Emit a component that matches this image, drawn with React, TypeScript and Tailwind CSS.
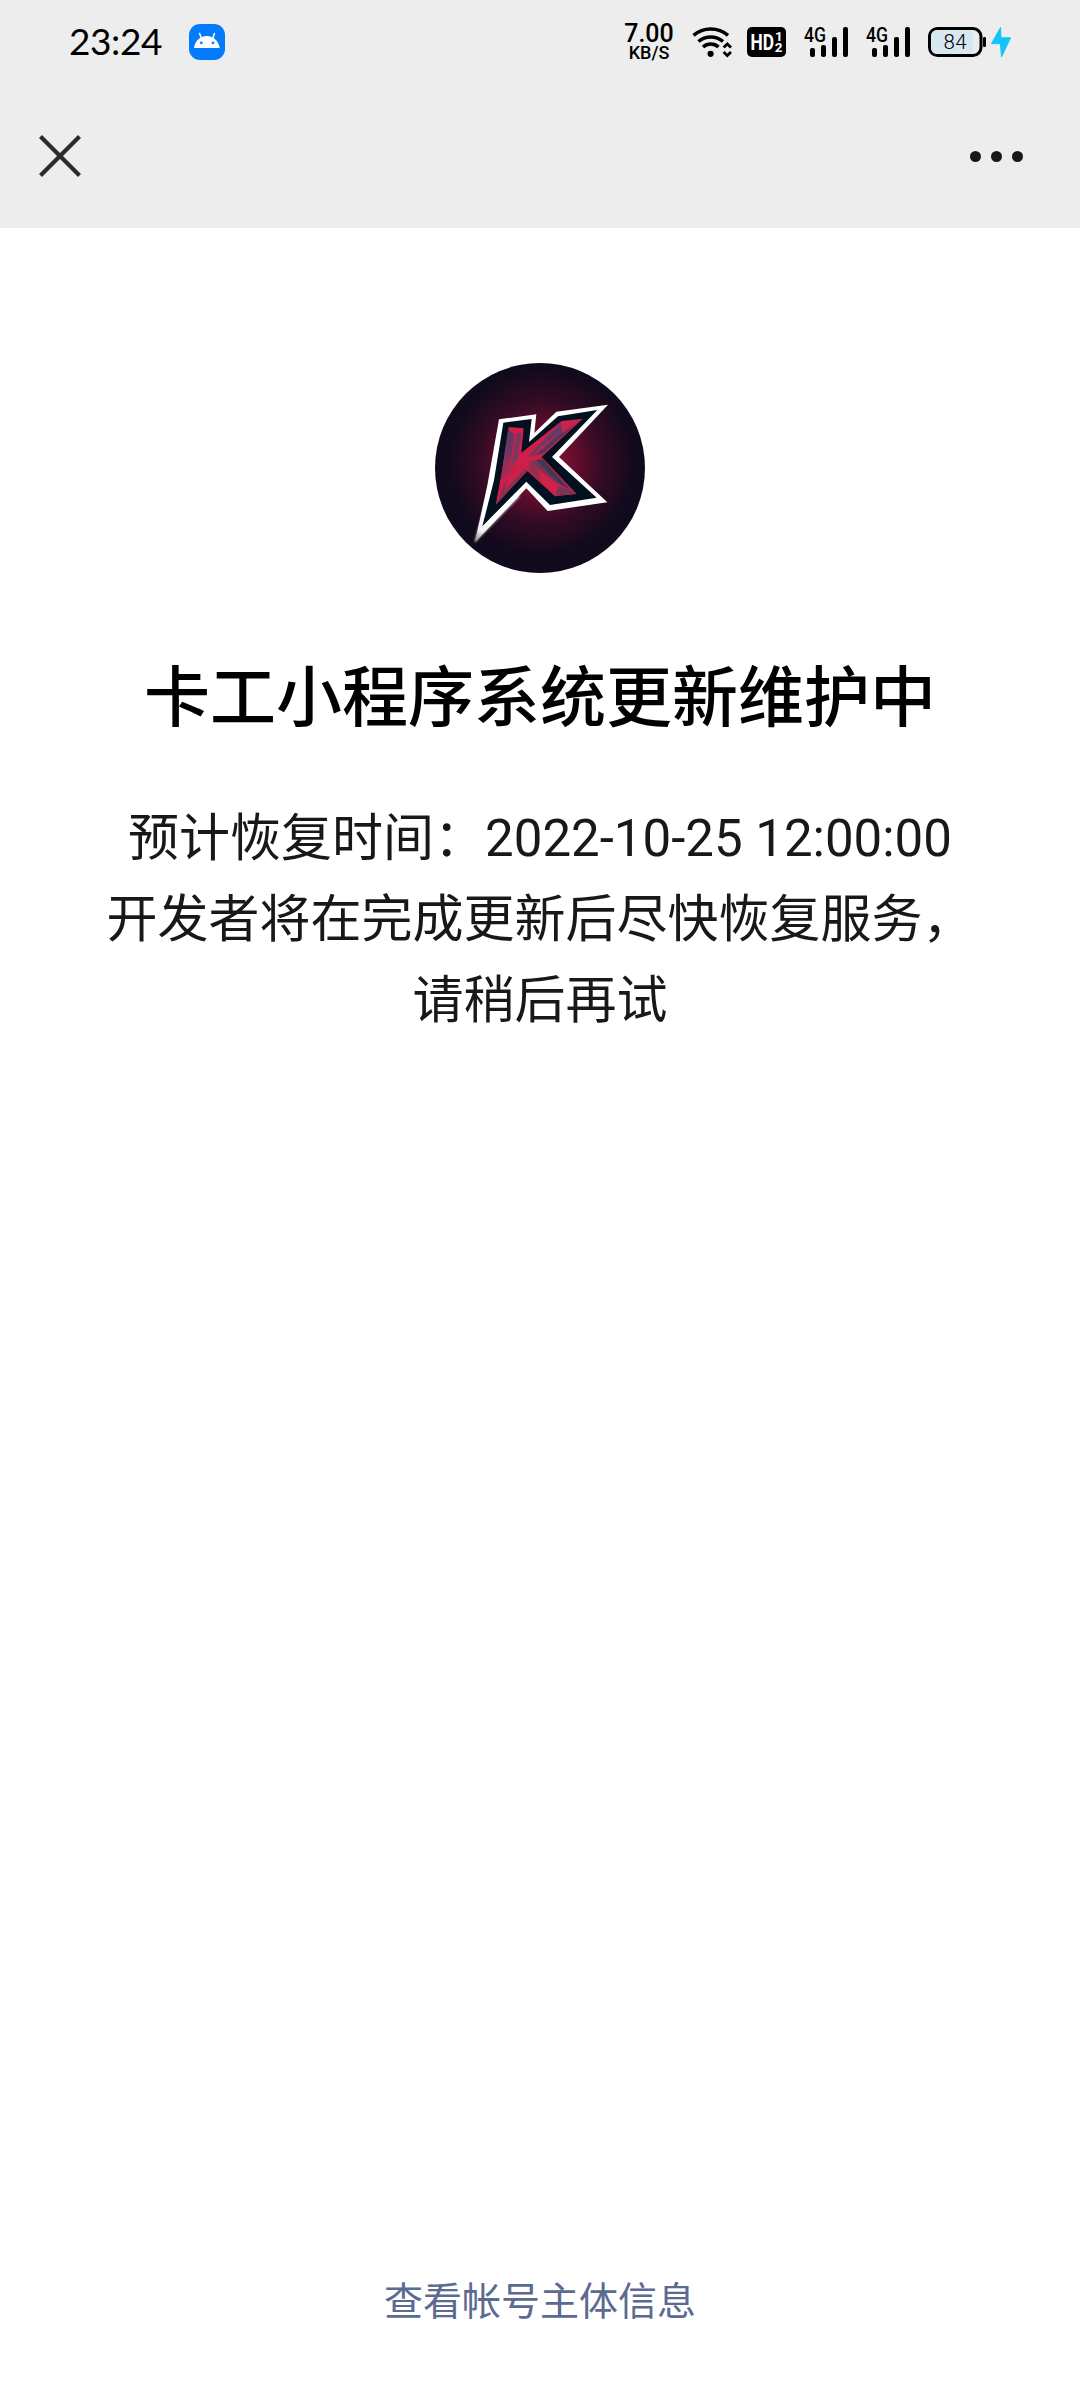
import React from "react";

function AndroidBadge() {
  return (
    <svg viewBox="0 0 36 36" className="w-9 h-9">
      <rect width="36" height="36" rx="11" fill="#047bfd" />
      <path d="M5 24C5.6 17.500 11 12 17.700 12S30 17.500 30.600 24Z" fill="#fff" />
      <path d="M12.600 14.500L10.600 9.500M23.600 14.500L25.500 9.500" stroke="#fff" strokeWidth="1.500" strokeLinecap="round" />
      <circle cx="12.300" cy="18.800" r="1.400" fill="#047bfd" />
      <circle cx="24" cy="18.800" r="1.400" fill="#047bfd" />
    </svg>
  );
}

function WifiIcon() {
  return (
    <svg viewBox="0 0 40 32" className="w-10 h-8" fill="none" stroke="#000" strokeWidth="3.600">
      <path d="M1.500 9.300C11.500 0.800 26 0.800 36 9.300" />
      <path d="M6.500 15.500C13.500 9.500 24 9.500 31 15.500" />
      <path d="M11 21C15.500 17 22 17 26.500 21" />
      <circle cx="18.600" cy="27.800" r="3.100" fill="#000" stroke="none" />
      <path d="M31.600 21.500L35.300 18L39 21.500M31.600 26L35.300 29.500L39 26" strokeWidth="2.800" />
    </svg>
  );
}

function HdIcon() {
  return (
    <svg viewBox="0 0 39 30" className="w-[39px] h-[30px]" fill="#fff" fontFamily="Roboto, sans-serif" fontWeight="700">
      <rect width="39" height="30" rx="5" fill="#000" />
      <text x="3.500" y="23" fontSize="22" textLength="23.500" lengthAdjust="spacingAndGlyphs">HD</text>
      <text x="28" y="14" fontSize="13.500">1</text>
      <text x="27.800" y="25.300" fontSize="13.500">2</text>
    </svg>
  );
}

function SignalIcon() {
  return (
    <svg viewBox="0 -4 46 40" className="w-[46px] h-10">
      <text x="1" y="15.500" fontSize="20" fontFamily="Roboto, sans-serif" fontWeight="500" textLength="22" lengthAdjust="spacingAndGlyphs">4G</text>
      <rect x="7" y="22" width="5" height="9" rx="2" />
      <rect x="18" y="19" width="5" height="12" rx="2" />
      <rect x="29" y="11" width="5" height="20" rx="2" />
      <rect x="40" y="1" width="5" height="30" rx="2" />
    </svg>
  );
}

function BatteryIcon() {
  return (
    <svg viewBox="0 0 84 34" className="w-[84px] h-[34px]">
      <rect x="1.500" y="3.500" width="51.500" height="27" rx="8" fill="#ededed" stroke="#000" strokeWidth="3" />
      <path d="M9.500 5H45V29H9.500Q3 29 3 22.500V11.500Q3 5 9.500 5Z" fill="#d7e8f1" />
      <rect x="55" y="12" width="3" height="10" rx="1.200" />
      <text x="27" y="24" fontSize="20.500" textAnchor="middle" fontFamily="Roboto, sans-serif" fontWeight="300" textLength="23">84</text>
      <path d="M72.500 2.500L63.500 18.700H72.500L73.500 32L82.500 12.800H73Z" fill="#14c3fb" stroke="#14c3fb" strokeLinejoin="round" />
    </svg>
  );
}

function Logo() {
  return (
    <svg viewBox="45 38 630 630" className="w-[210px] h-[210px]">
      <defs>
        <radialGradient id="glow" gradientUnits="userSpaceOnUse" cx="365" cy="335" r="280">
          <stop offset="0" stopColor="#960f39" />
          <stop offset="0.35" stopColor="#680d2e" />
          <stop offset="0.65" stopColor="#340b24" />
          <stop offset="1" stopColor="#110a1c" />
        </radialGradient>
        <linearGradient id="leg" x1="0" y1="0" x2="0" y2="1">
          <stop offset="0" stopColor="#553a66" />
          <stop offset="0.5" stopColor="#7a3560" />
          <stop offset="1" stopColor="#b5224d" />
        </linearGradient>
        <linearGradient id="tip" gradientUnits="userSpaceOnUse" x1="205" y1="500" x2="168" y2="575">
          <stop offset="0" stopColor="#fff" />
          <stop offset="0.55" stopColor="#f4f1f3" />
          <stop offset="1" stopColor="#8d858e" />
        </linearGradient>
        <filter id="soft" x="-10%" y="-10%" width="120%" height="120%">
          <feGaussianBlur stdDeviation="3.500" />
        </filter>
      </defs>
      <circle cx="360" cy="353" r="315" fill="url(#glow)" />
      <path d="M210 400L163 578L300 438Z" fill="#c9c3ca" filter="url(#soft)" />
      <path d="M237 207L349 192L343 248L409 184L564 163L417 320L562 456L383 482L319 414L165 575L202 405Z" fill="url(#tip)" />
      <path d="M250 217L335 206L327 275L414 198L532 179L396 320L530 442L390 464L319 394L187 528L222 390Z" fill="#03101f" />
      <path d="M266 230L311 234L304 307L425 212L488 205L365 320L470 431L405 438L322 362L227 464L248 350Z" fill="#cf1f48" />
      {/* shaded facets */}
      <path d="M264 238L281 251L276 310L251 382L242 392Z" fill="url(#leg)" />
      <path d="M281 250L304 245L294 325L270 372L250 384L278 312Z" fill="#a72b55" />
      <path d="M292 250L302 246L292 322L278 345Z" fill="#6f3a68" />
      <path d="M422 219L427 246L344 310L322 319Z" fill="#623c6a" />
      <path d="M427 246L482 207L368 311L335 319Z" fill="#9b2850" />
      <path d="M422 216L484 207L428 246Z" fill="#c9244d" />
      <path d="M418 254L457 230L370 309L350 311Z" fill="#4f395f" />
      <path d="M412 252L372 292L340 314L360 290Z" fill="#b3274f" />
      <path d="M329 335L365 324L449 416L414 401Z" fill="#713657" />
      <path d="M348 329L369 328L449 416L421 402Z" fill="#443654" />
      <path d="M330 345L410 402L404 435L326 362Z" fill="#ce2349" />
      <path d="M328 336L352 346L362 393L326 361Z" fill="#92304f" />
      <path d="M415 407L451 419L468 431L407 436Z" fill="#7b3456" />
      <path d="M304 350L321 361L229 462L249 406Z" fill="#8f2d54" />
      <path d="M309 347L319 350L250 425L271 377Z" fill="#c9234b" />
      <path d="M268 232L309 236L303 245L282 250Z" fill="#d31f47" />
    </svg>
  );
}

function StatusBar() {
  return (
    <div className="flex items-center h-[84px] pl-[69px] pr-[68px] text-black">
      <span className="w-[120px] pb-[3px] text-[37px] leading-none tracking-[-0.4px] font-[Lato,sans-serif]">23:24</span>
      <AndroidBadge />
      <div className="flex items-center ml-auto">
        <div className="flex flex-col items-center w-12 mr-[19px] font-[Roboto,sans-serif] font-medium">
          <span className="text-[25px] leading-[21px]">7.00</span>
          <span className="text-[18px] leading-[17px]">KB/S</span>
        </div>
        <WifiIcon />
        <div className="ml-[15px] mr-[17px]">
          <HdIcon />
        </div>
        <SignalIcon />
        <div className="ml-4 mr-[17px]">
          <SignalIcon />
        </div>
        <BatteryIcon />
      </div>
    </div>
  );
}

export default function App() {
  return (
    <div className="flex flex-col h-[2400px] w-[1080px] bg-white font-[Roboto,'Noto_Sans_CJK_SC',sans-serif]" lang="zh-CN">
      <header className="h-[228px] bg-[#ededed]">
        <StatusBar />
        <div className="flex items-center justify-between h-36 pl-[39px] pr-[57px]">
          <button aria-label="关闭">
            <svg viewBox="0 0 42 42" className="w-[42px] h-[42px]">
              <path d="M1.500 1.500L40.500 40.500M40.500 1.500L1.500 40.500" stroke="#2b2b2b" strokeWidth="4.200" />
            </svg>
          </button>
          <button aria-label="更多" className="flex gap-2.5">
            <span className="w-[11px] h-[11px] rounded-full bg-[#181818]" />
            <span className="w-[11px] h-[11px] rounded-full bg-[#181818]" />
            <span className="w-[11px] h-[11px] rounded-full bg-[#181818]" />
          </button>
        </div>
      </header>

      <main className="flex flex-col items-center flex-1 pt-[135px]">
        <Logo />
        <h1 className="mt-[77px] text-[66px] leading-[98px] font-medium text-black">卡工小程序系统更新维护中</h1>
        <p className="mt-[50px] text-[51px] leading-[81px] text-center text-[#181818]">
          预计恢复时间：2022-10-25 12:00:00
          <br />
          开发者将在完成更新后尽快恢复服务，
          <br />
          请稍后再试
        </p>
      </main>

      <footer className="flex justify-center pb-[70px]">
        <a href="#" className="text-[39px] leading-[56px] text-[#5a6a90]">查看帐号主体信息</a>
      </footer>
    </div>
  );
}
